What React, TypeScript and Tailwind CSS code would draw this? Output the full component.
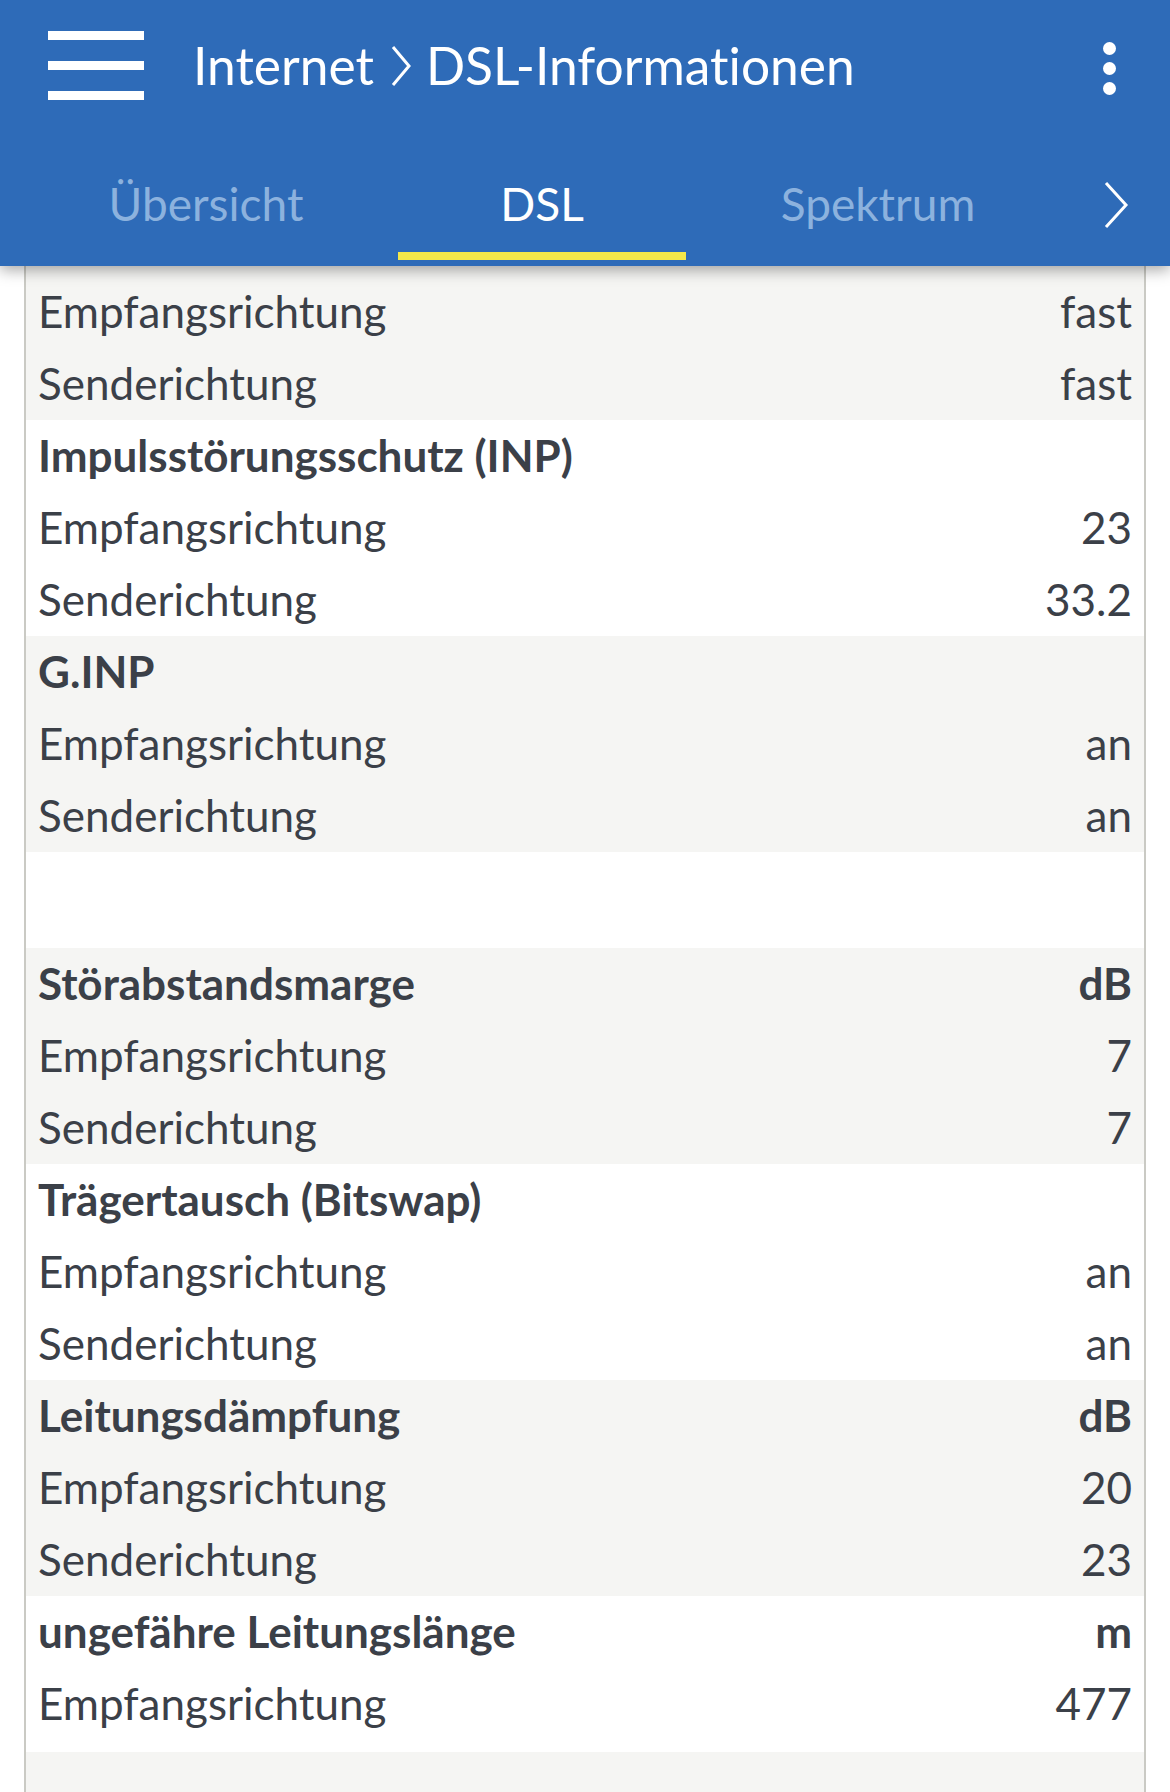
type Row = { label: string; value?: string; bold?: boolean };

const groups: { bg: string; rows: Row[]; extra?: string }[] = [
  {
    bg: 'bg-[#f5f5f3]',
    extra: 'pt-[10px]',
    rows: [
      { label: 'Empfangsrichtung', value: 'fast' },
      { label: 'Senderichtung', value: 'fast' },
    ],
  },
  {
    bg: 'bg-white',
    rows: [
      { label: 'Impulsstörungsschutz (INP)', bold: true },
      { label: 'Empfangsrichtung', value: '23' },
      { label: 'Senderichtung', value: '33.2' },
    ],
  },
  {
    bg: 'bg-[#f5f5f3]',
    rows: [
      { label: 'G.INP', bold: true },
      { label: 'Empfangsrichtung', value: 'an' },
      { label: 'Senderichtung', value: 'an' },
    ],
  },
  { bg: 'bg-white', extra: 'h-[96px]', rows: [] },
  {
    bg: 'bg-[#f5f5f3]',
    rows: [
      { label: 'Störabstandsmarge', value: 'dB', bold: true },
      { label: 'Empfangsrichtung', value: '7' },
      { label: 'Senderichtung', value: '7' },
    ],
  },
  {
    bg: 'bg-white',
    rows: [
      { label: 'Trägertausch (Bitswap)', bold: true },
      { label: 'Empfangsrichtung', value: 'an' },
      { label: 'Senderichtung', value: 'an' },
    ],
  },
  {
    bg: 'bg-[#f5f5f3]',
    rows: [
      { label: 'Leitungsdämpfung', value: 'dB', bold: true },
      { label: 'Empfangsrichtung', value: '20' },
      { label: 'Senderichtung', value: '23' },
    ],
  },
  {
    bg: 'bg-white',
    extra: 'pb-[12px]',
    rows: [
      { label: 'ungefähre Leitungslänge', value: 'm', bold: true },
      { label: 'Empfangsrichtung', value: '477' },
    ],
  },
  { bg: 'bg-[#f5f5f3]', extra: 'h-[60px]', rows: [] },
];

const Header = () => {
  return (
    <header className="relative z-10 bg-[#2e6bb8] shadow-[0_4px_14px_rgba(0,0,0,0.35)]">
      <div className="flex h-[155px] items-start">
        <div className="ml-[48px] mt-[31px] flex w-[96px] flex-col gap-[21px]">
          <span className="block h-[9px] bg-white" />
          <span className="block h-[9px] bg-white" />
          <span className="block h-[9px] bg-white" />
        </div>
        <div className="ml-[49px] mt-[40px] flex items-center text-[51.5px] leading-none text-white">
          <span>Internet</span>
          <svg width="22" height="42" viewBox="0 0 22 42" className="ml-[16px] mr-[14px]">
            <path d="M3 2 L19 21 L3 40" fill="none" stroke="white" strokeWidth="3" />
          </svg>
          <span>DSL-Informationen</span>
        </div>
        <div className="ml-auto mr-[54px] mt-[42px] flex flex-col gap-[7px]">
          <span className="block h-[13px] w-[13px] rounded-full bg-white" />
          <span className="block h-[13px] w-[13px] rounded-full bg-white" />
          <span className="block h-[13px] w-[13px] rounded-full bg-white" />
        </div>
      </div>
      <div className="flex h-[111px] items-stretch pl-[62px] text-[46px] leading-none">
        <div className="flex w-[288px] items-center justify-center pb-[14px] text-[#8cb2de]">Übersicht</div>
        <div className="relative ml-[48px] flex w-[288px] items-center justify-center pb-[14px] text-white">
          DSL
          <span className="absolute bottom-[6px] left-0 h-[8px] w-full bg-[#f4e84a]" />
        </div>
        <div className="ml-[48px] flex w-[288px] items-center justify-center pb-[14px] text-[#8cb2de]">Spektrum</div>
        <div className="ml-auto mr-[41px] flex items-center pb-[12px] text-white">
          <svg width="26" height="48" viewBox="0 0 26 48">
            <path d="M3 2 L23 24 L3 46" fill="none" stroke="white" strokeWidth="3" />
          </svg>
        </div>
      </div>
    </header>
  );
};

export default function App() {
  return (
    <div
      className="h-[1792px] w-[1170px] overflow-hidden bg-white [font-variant-ligatures:none]"
      style={{ fontFamily: 'Lato, "Noto Sans", sans-serif' }}
    >
      <Header />
      <div className="mx-[24px] border-x-2 border-[#cacac4] text-[#3b4048]">
        {groups.map((g, gi) => (
          <div key={gi} className={`${g.bg} ${g.extra ?? ''}`}>
            {g.rows.map((r, ri) => (
              <div
                key={ri}
                className={`flex h-[72px] items-center justify-between pb-[2px] pl-[12px] pr-[12px] text-[44px] leading-none ${
                  r.bold ? 'font-bold' : ''
                }`}
              >
                <span>{r.label}</span>
                {r.value && <span>{r.value}</span>}
              </div>
            ))}
          </div>
        ))}
      </div>
    </div>
  );
}
